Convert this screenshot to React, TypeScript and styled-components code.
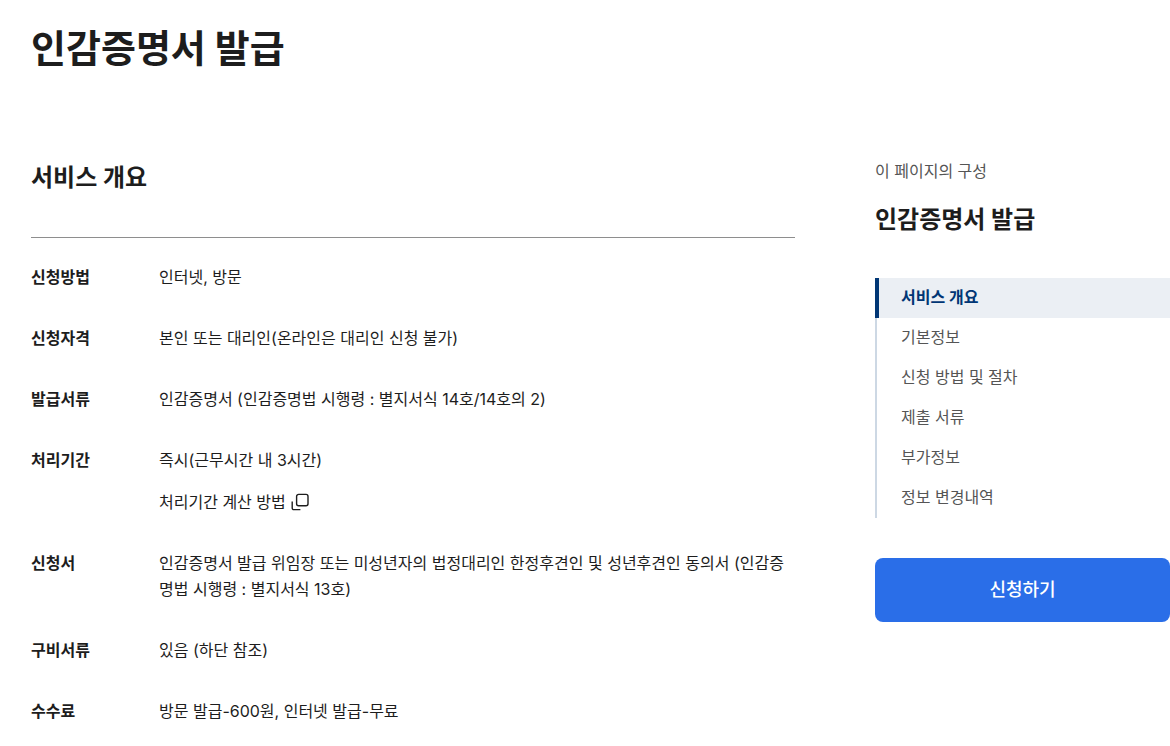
import React from "react";
import styled, { createGlobalStyle } from "styled-components";

const Global = createGlobalStyle`
  *, *::before, *::after { box-sizing: border-box; }
  html { overflow-x: hidden; scrollbar-width: none; }
  body {
    margin: 0;
    background: #fff;
    color: #1d1d1d;
    font-family: Inter, "Noto Sans CJK KR", sans-serif;
    font-size: 16px;
    line-height: 26px;
    word-break: break-all;
  }
  h1, h2, p, dl, dd, ul { margin: 0; padding: 0; }
`;

const Page = styled.div`
  padding: 19px 0 0 31px;
`;

const PageTitle = styled.h1`
  font-size: 38px;
  line-height: 58px;
  font-weight: 700;
`;

const Columns = styled.div`
  display: grid;
  grid-template-columns: minmax(0, 1fr) 295px;
  column-gap: 80px;
  margin-top: 81px;
`;

const SectionTitle = styled.h2`
  font-size: 24px;
  line-height: 36px;
  font-weight: 700;
`;

const Main = styled.main`
  padding-top: 2px;
`;

const Details = styled.dl`
  display: flex;
  flex-direction: column;
  gap: 35px;
  margin-top: 41px;
  padding-top: 26px;
  border-top: 1px solid #8e8e8e;
`;

const Row = styled.div`
  display: grid;
  grid-template-columns: 104px minmax(0, 1fr);
  column-gap: 24px;
`;

const Term = styled.dt`
  font-weight: 700;
`;

const Value = styled.dd`
  display: flex;
  flex-direction: column;
  align-items: flex-start;
  gap: 16px;
`;

const PopupLink = styled.a`
  display: inline-flex;
  align-items: center;
  gap: 5px;
  color: inherit;
  text-decoration: none;
`;

const Side = styled.aside``;

const SideCaption = styled.p`
  color: #555;
`;

const SideTitle = styled(SectionTitle)`
  margin-top: 18px;
`;

const Menu = styled.ul`
  list-style: none;
  margin-top: 40px;
`;

const MenuLink = styled.a<{ $active?: boolean }>`
  display: block;
  padding: 6px 24px 8px;
  text-decoration: none;
  border-left: ${(p) => (p.$active ? "4px solid #003675" : "2px solid #cdd8e4")};
  padding-left: ${(p) => (p.$active ? "22px" : "24px")};
  background: ${(p) => (p.$active ? "#ebeff4" : "transparent")};
  color: ${(p) => (p.$active ? "#003675" : "#555")};
  font-weight: ${(p) => (p.$active ? 700 : 400)};
`;

const ApplyButton = styled.button`
  width: 100%;
  height: 64px;
  margin-top: 40px;
  border: 0;
  border-radius: 8px;
  background: #2a6ee8;
  color: #fff;
  font: inherit;
  font-size: 18px;
  font-weight: 500;
`;

const CopyIcon = () => (
  <svg width="18" height="18" viewBox="0 0 18 18" fill="none" stroke="currentColor" strokeWidth="1.4" aria-hidden="true">
    <rect x="5.600" y="1.400" width="11.400" height="11.400" rx="2" />
    <path d="M1.200 8.600v6.400a1.600 1.600 0 0 0 1.600 1.600h6.600" />
  </svg>
);

const rows: { term: string; text: string; link?: string }[] = [
  { term: "신청방법", text: "인터넷, 방문" },
  { term: "신청자격", text: "본인 또는 대리인(온라인은 대리인 신청 불가)" },
  { term: "발급서류", text: "인감증명서 (인감증명법 시행령 : 별지서식 14호/14호의 2)" },
  { term: "처리기간", text: "즉시(근무시간 내 3시간)", link: "처리기간 계산 방법" },
  {
    term: "신청서",
    text: "인감증명서 발급 위임장 또는 미성년자의 법정대리인 한정후견인 및 성년후견인 동의서 (인감증명법 시행령 : 별지서식 13호)",
  },
  { term: "구비서류", text: "있음 (하단 참조)" },
  { term: "수수료", text: "방문 발급-600원, 인터넷 발급-무료" },
];

const menu = ["서비스 개요", "기본정보", "신청 방법 및 절차", "제출 서류", "부가정보", "정보 변경내역"];

export default function App() {
  return (
    <>
      <Global />
      <Page lang="ko">
        <PageTitle>인감증명서 발급</PageTitle>
        <Columns>
          <Main>
            <SectionTitle>서비스 개요</SectionTitle>
            <Details>
              {rows.map((row) => (
                <Row key={row.term}>
                  <Term>{row.term}</Term>
                  <Value>
                    <span>{row.text}</span>
                    {row.link && (
                      <PopupLink href="#period">
                        {row.link}
                        <CopyIcon />
                      </PopupLink>
                    )}
                  </Value>
                </Row>
              ))}
            </Details>
          </Main>
          <Side>
            <SideCaption>이 페이지의 구성</SideCaption>
            <SideTitle>인감증명서 발급</SideTitle>
            <nav aria-label="이 페이지의 구성">
              <Menu>
                {menu.map((item, i) => (
                  <li key={item}>
                    <MenuLink href={`#section-${i + 1}`} $active={i === 0}>
                      {item}
                    </MenuLink>
                  </li>
                ))}
              </Menu>
            </nav>
            <ApplyButton type="button">신청하기</ApplyButton>
          </Side>
        </Columns>
      </Page>
    </>
  );
}
